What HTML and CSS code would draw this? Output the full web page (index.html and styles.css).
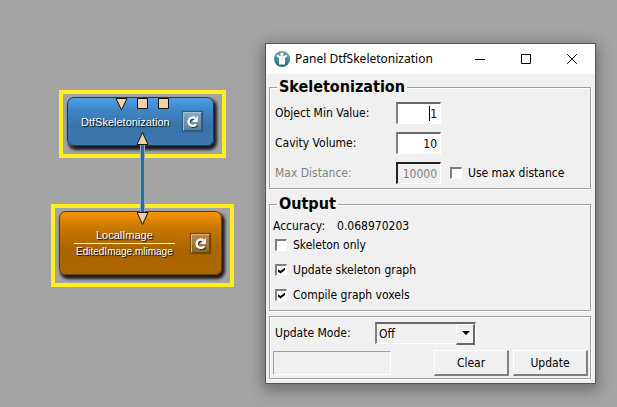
FILE: index.html
```
<!DOCTYPE html>
<html lang="en">
<head>
<meta charset="utf-8">
<title>Panel DtfSkeletonization</title>
<link rel="stylesheet" href="styles.css">
</head>
<body>
<main class="workspace">
  <section class="network" aria-label="Module network">
    <article class="module module-blue">
      <div class="module-box">
        <span class="module-name">DtfSkeletonization</span>
        <button class="reload" aria-label="Reload DtfSkeletonization">
          <svg viewBox="0 0 17 17"><path class="reload-shade" d="M12.2 11.2A4.2 4.2 0 1 1 11.4 5.4"/><path class="reload-arc" d="M12.2 11.2A4.2 4.2 0 1 1 11.4 5.4"/><path class="reload-head" d="M13.8 3V9H8Z"/></svg>
        </button>
      </div>
    </article>
    <article class="module module-orange">
      <div class="module-box">
        <span class="module-text">
          <span class="module-name">LocalImage</span>
          <span class="module-file">EditedImage.mlimage</span>
        </span>
        <button class="reload" aria-label="Reload LocalImage">
          <svg viewBox="0 0 17 17"><path class="reload-shade" d="M12.2 11.2A4.2 4.2 0 1 1 11.4 5.4"/><path class="reload-arc" d="M12.2 11.2A4.2 4.2 0 1 1 11.4 5.4"/><path class="reload-head" d="M13.8 3V9H8Z"/></svg>
        </button>
      </div>
    </article>
    <svg class="links" viewBox="0 0 265 300" aria-hidden="true">
      <path class="link-glow" d="M142.5 144V213"/>
      <path class="link-line" d="M142.5 144V213"/>
      <g class="port">
        <path d="M116 98.5H127L121.5 110Z"/>
        <path d="M137.5 98.5H147.5V108.5H137.5Z"/>
        <path d="M158.5 98.5H168.5V108.5H158.5Z"/>
        <path d="M137 144.5H148L142.5 132.5Z"/>
        <path d="M137 212.5H148L142.5 224.5Z"/>
      </g>
    </svg>
  </section>

  <section class="window" aria-label="Panel DtfSkeletonization">
    <header class="titlebar">
      <svg class="app-icon" viewBox="0 0 16 16" aria-hidden="true">
        <defs><linearGradient id="disc" x2="0" y2="1"><stop offset="0" stop-color="#62a5b4"/><stop offset="1" stop-color="#286984"/></linearGradient></defs>
        <circle cx="8" cy="8" r="8" fill="url(#disc)"/>
        <circle cx="8" cy="3.2" r="1.6" fill="#fff"/>
        <path d="M2.8 3.4L5.5 4.7H10.5L13.2 3.4V5.6L11 7V13.4H5V7L2.8 5.6Z" fill="#fff"/>
        <path d="M8 7V10" stroke="#bad5dc" stroke-width="1"/>
      </svg>
      <h1 class="title">Panel DtfSkeletonization</h1>
      <div class="caption-buttons">
        <button aria-label="Minimize"><svg viewBox="0 0 10 10"><path d="M0 5.5H10"/></svg></button>
        <button aria-label="Maximize"><svg viewBox="0 0 10 10"><path d="M.5 .5H9.5V9.5H.5Z"/></svg></button>
        <button aria-label="Close"><svg viewBox="0 0 10 10"><path d="M.2 .2L9.8 9.8M9.8 .2L.2 9.8"/></svg></button>
      </div>
    </header>
    <form class="content">
      <fieldset class="group group-input">
        <legend>Skeletonization</legend>
        <div class="row">
          <label class="row-label" for="minvalue">Object Min Value:</label>
          <input class="number editing" id="minvalue" type="text" value="1">
        </div>
        <div class="row">
          <label class="row-label" for="cavity">Cavity Volume:</label>
          <input class="number" id="cavity" type="text" value="10">
        </div>
        <div class="row">
          <label class="row-label off" for="maxdist">Max Distance:</label>
          <input class="number" id="maxdist" type="text" value="10000" disabled>
          <label class="check beside"><input type="checkbox">Use max distance</label>
        </div>
      </fieldset>
      <fieldset class="group group-output">
        <legend>Output</legend>
        <p class="accuracy"><span>Accuracy:</span><output>0.068970203</output></p>
        <div class="checks">
          <label class="check"><input type="checkbox">Skeleton only</label>
          <label class="check"><input type="checkbox" checked>Update skeleton graph</label>
          <label class="check"><input type="checkbox" checked>Compile graph voxels</label>
        </div>
      </fieldset>
      <div class="group group-update">
        <div class="mode">
          <label class="mode-label" for="mode">Update Mode:</label>
          <span class="select"><select id="mode"><option>Off</option></select></span>
        </div>
        <div class="actions">
          <div class="progress" role="progressbar" aria-label="Progress"></div>
          <button class="push" type="button">Clear</button>
          <button class="push" type="button">Update</button>
        </div>
      </div>
    </form>
  </section>
</main>
</body>
</html>
```
FILE: styles.css
```
* {
  box-sizing: border-box;
}

body {
  margin: 0;
  background: #a4a4a4;
  color: #000;
  font: 12px/16px "DejaVu Sans Condensed", "DejaVu Sans", sans-serif;
}

button,
input,
select {
  margin: 0;
  padding: 0;
  border: 0;
  border-radius: 0;
  color: inherit;
  font: inherit;
  appearance: none;
}

.workspace {
  display: grid;
  grid-template-columns: 265px 1fr;
  align-items: start;
  min-height: 100vh;
}

/* Module network */

.network {
  position: relative;
  height: 300px;
}

.module {
  position: absolute;
  padding: 3px 8px 8px 4px;
  border: 4px solid #ffef20;
}

.module-blue {
  left: 59px;
  top: 90px;
  width: 167px;
  height: 68px;
}

.module-orange {
  left: 51px;
  top: 204px;
  width: 183px;
  height: 83px;
}

.module-box {
  display: flex;
  align-items: center;
  justify-content: space-between;
  height: 100%;
  padding: 0 11px 0 13px;
  border: 1px solid #173b5c;
  border-radius: 7px;
  box-shadow: 2px 3px 3px 1px #1c1c1c;
  color: #fff;
  font: 11px/16px "Liberation Sans", sans-serif;
  text-shadow: 1px 1px 1px #000;
}

.module-blue .module-box {
  background: linear-gradient(#4d9fe8, #3f86c6 25%, #3a74a8 60%, #3b78b0);
}

.module-orange .module-box {
  border-color: #6b3b00;
  background: linear-gradient(#fa9404, #c87800 25%, #ab6500 60%, #ad6700);
}

.module-text {
  display: flex;
  flex-direction: column;
  padding-left: 1px;
  text-align: center;
}

.module-file {
  padding: 0 2px;
  border-top: 1px solid #fff;
  font-size: 10px;
}

.reload {
  width: 19px;
  height: 19px;
  border: 1px solid #a3bfd6;
  border-right-color: #2d5c85;
  border-bottom-color: #2d5c85;
  background: linear-gradient(#86a9c8, #57809f);
  box-shadow: 0 0 1px 1px #2d5c85;
}

.module-orange .reload {
  border-color: #d6b27e #714500 #714500 #d6b27e;
  background: linear-gradient(#b68a4b, #8d662c);
  box-shadow: 0 0 1px 1px #7c4b00;
}

.reload svg {
  display: block;
  width: 17px;
  height: 17px;
}

.reload-arc,
.reload-shade {
  fill: none;
  stroke: #fff;
  stroke-width: 2.4;
}

.reload-shade {
  stroke: #333;
  transform: translate(1px, 1px);
}

.reload-head {
  fill: #fff;
}

.links {
  position: absolute;
  inset: 0;
  width: 265px;
  height: 300px;
  pointer-events: none;
}

.link-glow {
  stroke: #9aa9b4;
  stroke-width: 5;
}

.link-line {
  stroke: #2c68a5;
  stroke-width: 3;
}

.port {
  fill: #f2cfa6;
  stroke: #15120e;
}

/* Panel window */

.window {
  margin: 43px 21px 0 0;
  border: 1px solid #555;
  background: #f0f0f0;
  box-shadow: 0 4px 14px 2px rgba(0, 0, 0, 0.35);
}

.titlebar {
  display: flex;
  align-items: center;
  height: 30px;
  padding-left: 8px;
  background: #fff;
}

.app-icon {
  width: 16px;
  height: 16px;
}

.title {
  flex: 1;
  margin: 0 0 0 5px;
  font: 12px/16px "Noto Sans", sans-serif;
}

.caption-buttons {
  display: flex;
}

.caption-buttons button {
  display: grid;
  place-items: center;
  width: 46px;
  height: 30px;
  background: none;
}

.caption-buttons svg {
  width: 10px;
  height: 10px;
  fill: none;
  stroke: #000;
}

.content {
  padding: 3px 4px 4px 3px;
}

.group {
  min-width: 0;
  margin: 0;
  border: 1px solid #a0a0a0;
  box-shadow: 1px 1px #fff, inset 1px 1px #fff;
}

.group legend {
  padding: 0 2px;
  background: #f0f0f0;
  font-size: 16px;
  font-weight: bold;
  line-height: 20px;
}

.group-input {
  padding: 5px 5px 4px;
}

.group-input legend {
  margin-left: 2px;
}

.row {
  display: flex;
  align-items: center;
  height: 22px;
}

.row + .row {
  margin-top: 8px;
}

.row-label {
  width: 121px;
}

.off {
  color: #828282;
}

.number {
  width: 45px;
  height: 22px;
  padding: 0 3px;
  border: 1px solid #fff;
  border-top: 2px solid #696969;
  border-left: 2px solid #808080;
  background: #fff;
  text-align: right;
}

.editing {
  background: linear-gradient(#000, #000) 31px 2px / 1px 15px no-repeat #fff;
}

.number:disabled {
  border-top-color: #222;
  border-left-color: #222;
  background: #f0f0f0;
  color: #828282;
}

.check {
  display: flex;
  align-items: center;
  gap: 6px;
}

.beside {
  margin-left: 9px;
}

.check input {
  display: grid;
  place-items: center;
  flex: none;
  width: 12px;
  height: 12px;
  border: 1px solid #fff;
  border-top: 2px solid #808080;
  border-left: 2px solid #808080;
  background: #fff;
}

.check input:checked::after {
  content: "";
  width: 7px;
  height: 6px;
  background: #000;
  clip-path: polygon(0 30%, 36% 60%, 100% 0, 100% 40%, 36% 100%, 0 70%);
}

.group-output {
  margin-top: 5px;
  padding: 4px 5px 7px 3px;
}

.group-output legend {
  margin-left: 4px;
}

.accuracy {
  display: flex;
  gap: 12px;
  margin: 0;
}

.checks {
  display: flex;
  flex-direction: column;
  gap: 9px;
  margin: 3px 0 0 2px;
}

.group-update {
  margin-top: 5px;
  padding: 5px 2px 2px 3px;
}

.mode {
  display: flex;
  align-items: center;
}

.mode-label {
  width: 102px;
  padding-left: 2px;
}

.select {
  position: relative;
  width: 101px;
}

.select select {
  display: block;
  width: 100%;
  height: 22px;
  padding: 0 2px;
  border: 1px solid #fff;
  border-top: 2px solid #696969;
  border-left: 2px solid #808080;
  background: #f0f0f0;
}

.select::before {
  content: "";
  position: absolute;
  top: 2px;
  right: 1px;
  width: 16px;
  height: 18px;
  border: 1px solid #fff;
  border-right: 2px solid #696969;
  border-bottom: 2px solid #696969;
  pointer-events: none;
}

.select::after {
  content: "";
  position: absolute;
  top: 9px;
  right: 6px;
  border: 4px solid transparent;
  border-top-color: #000;
  border-bottom: 0;
  pointer-events: none;
}

.actions {
  display: flex;
  align-items: center;
  gap: 4px;
  margin-top: 6px;
}

.progress {
  width: 118px;
  height: 24px;
  margin-right: auto;
  border: 1px solid #fff;
  border-top-color: #a0a0a0;
  border-left-color: #a0a0a0;
}

.push {
  width: 75px;
  height: 26px;
  border: 1px solid #fff;
  border-right: 2px solid #808080;
  border-bottom: 2px solid #808080;
  background: #f0f0f0;
}
```
